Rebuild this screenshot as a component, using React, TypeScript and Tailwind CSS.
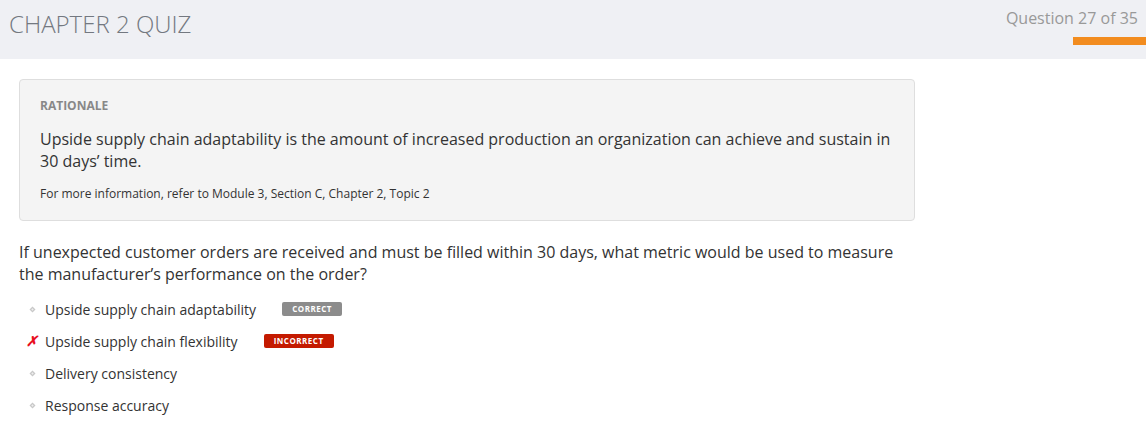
import React from "react";

const answers = [
  { text: "Upside supply chain adaptability", badge: "correct" },
  { text: "Upside supply chain flexibility", badge: "incorrect", wrong: true },
  { text: "Delivery consistency" },
  { text: "Response accuracy" },
];

const Diamond = () => (
  <svg width="7" height="7" viewBox="0 0 7 7" className="block">
    <path d="M3.5 0.5 L6.5 3.5 L3.5 6.5 L0.5 3.5 Z" fill="#c8c8c8" />
    <path d="M3.5 2.3 L4.7 3.5 L3.5 4.7 L2.3 3.5 Z" fill="#efefef" />
  </svg>
);

const App = () => {
  return (
    <div className="w-[1146px] h-[432px] bg-white font-['Open_Sans',sans-serif] text-[#333]">
      <header className="h-[59px] bg-[#eff0f4] flex justify-between">
        <h1 className="pl-[9px] pt-[6px] text-[24px] font-light text-[#737880]">
          CHAPTER 2 QUIZ
        </h1>
        <div className="flex flex-col items-end pt-[7px]">
          <div className="pr-[8px] text-[16px] text-[#999] leading-[22px]">
            Question 27 of 35
          </div>
          <div className="mt-[8px] w-[73px] h-[8px] bg-[#f28c1f]" />
        </div>
      </header>

      <main className="pl-[19px] pt-[20px] w-[915px]">
        <section className="bg-[#f4f4f4] border border-[#dedede] rounded-[4px] px-[20px] pt-[18px] pb-[17px]">
          <div className="text-[12px] font-bold text-[#888] leading-[16px]">RATIONALE</div>
          <p className="mt-[14px] text-[16px] leading-[22px] text-[#333]">
            Upside supply chain adaptability is the amount of increased production an organization can achieve and sustain in 30 days’ time.
          </p>
          <p className="mt-[13px] text-[12px] leading-[18px] text-[#333]">
            For more information, refer to Module 3, Section C, Chapter 2, Topic 2
          </p>
        </section>

        <p className="mt-[20px] text-[16px] leading-[22px] text-[#333] pr-[10px]">
          If unexpected customer orders are received and must be filled within 30 days, what metric would be used to measure the manufacturer’s performance on the order?
        </p>

        <ul className="mt-[8px] flex flex-col">
          {answers.map((a) => (
            <li key={a.text} className="h-[32px] flex items-center text-[14px] text-[#333]">
              <span className="w-[26px] flex justify-center">
                {a.wrong ? (
                  <span className="text-[#e8101e] font-bold italic text-[14px] leading-none">✗</span>
                ) : (
                  <Diamond />
                )}
              </span>
              <span>{a.text}</span>
              {a.badge === "correct" && (
                <span className="ml-[26px] bg-[#8c8c8c] text-white text-[8px] font-bold tracking-[0.5px] rounded-[2px] w-[60px] h-[14px] flex items-center justify-center">
                  CORRECT
                </span>
              )}
              {a.badge === "incorrect" && (
                <span className="ml-[26px] bg-[#c41a00] text-white text-[8px] font-bold tracking-[0.5px] rounded-[2px] w-[70px] h-[14px] flex items-center justify-center">
                  INCORRECT
                </span>
              )}
            </li>
          ))}
        </ul>
      </main>
    </div>
  );
};

export default App;
